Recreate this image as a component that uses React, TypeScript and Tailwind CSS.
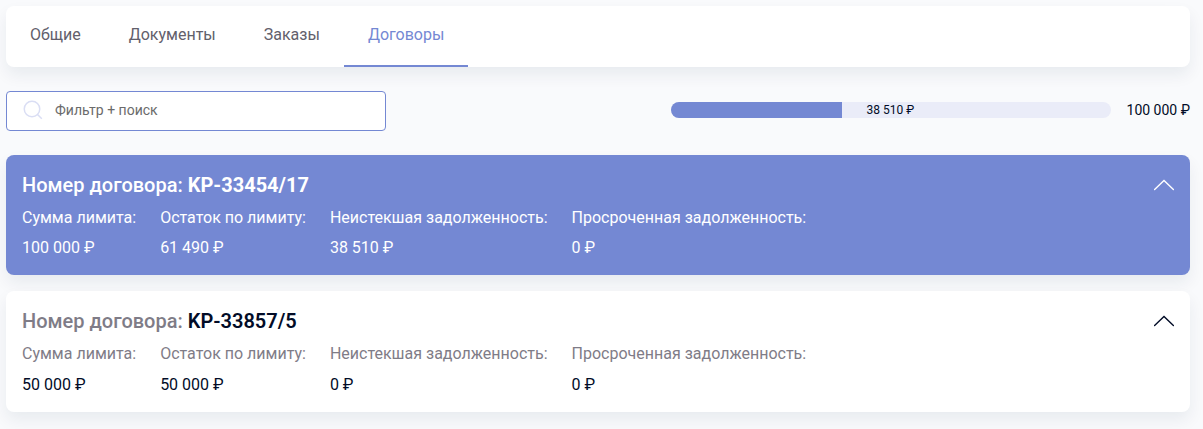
type Contract = {
  id: string;
  active: boolean;
  values: string[];
};

const tabs = ["Общие", "Документы", "Заказы", "Договоры"];

const labels = [
  "Сумма лимита:",
  "Остаток по лимиту:",
  "Неистекшая задолженность:",
  "Просроченная задолженность:",
];

const contracts: Contract[] = [
  { id: "KP-33454/17", active: true, values: ["100 000 ₽", "61 490 ₽", "38 510 ₽", "0 ₽"] },
  { id: "KP-33857/5", active: false, values: ["50 000 ₽", "50 000 ₽", "0 ₽", "0 ₽"] },
];

const shadow = "shadow-[0_8px_16px_rgba(0,46,70,0.07)]";

function SearchIcon() {
  return (
    <svg className="h-5 w-5 shrink-0" viewBox="0 0 20 20" fill="none" stroke="#dadef4" strokeWidth="1.5">
      <circle cx="9" cy="9" r="7.75" />
      <path d="M14.5 14.5L18.8 18.8" />
    </svg>
  );
}

function ChevronUp() {
  return (
    <svg className="h-3 w-5" viewBox="0 0 20 12" fill="none" stroke="currentColor" strokeWidth="1.4" strokeLinecap="round">
      <path d="M0.6 10.6L10 1.4L19.4 10.6" />
    </svg>
  );
}

function ContractCard({ contract }: { contract: Contract }) {
  const { active } = contract;
  return (
    <section
      className={`rounded-lg px-4 ${shadow} ${
        active ? "h-[120px] bg-[#7488d3] text-white" : "h-[121px] bg-white text-[#020c27]"
      }`}
    >
      <div className="flex h-[51px] items-end justify-between">
        <h2 className={`mb-[9px] text-xl leading-6 font-medium ${active ? "" : "text-[#7f7c87]"}`}>
          Номер договора:{" "}
          <span className={active ? "font-bold" : "font-semibold text-[#020c27]"}>{contract.id}</span>
        </h2>
        <button className="mb-[15px]" aria-label="Свернуть">
          <ChevronUp />
        </button>
      </div>
      <dl className="flex gap-6 text-base leading-6">
        {labels.map((label, i) => (
          <div key={label}>
            <dt className={active ? "" : "text-[#7f7c87]"}>{label}</dt>
            <dd className={active ? "mt-1.5" : "mt-[7px]"}>{contract.values[i]}</dd>
          </div>
        ))}
      </dl>
    </section>
  );
}

export default function App() {
  return (
    <main className="h-[429px] overflow-hidden bg-[#f9fafc] pt-1.5 pr-[13px] pl-1.5 font-[Roboto,sans-serif]">
      <nav className={`flex h-[61px] rounded-lg bg-white ${shadow}`}>
        {tabs.map((tab) => (
          <a
            key={tab}
            className={`h-full border-b-2 px-6 pt-[17px] text-base leading-6 ${
              tab === "Договоры" ? "border-[#7488d3] text-[#7488d3]" : "border-transparent text-[#62606b]"
            }`}
          >
            {tab}
          </a>
        ))}
      </nav>

      <div className="mt-6 flex h-10 items-center justify-between">
        <label className="flex h-10 w-[380px] items-center gap-3 rounded border border-[#7488d3] bg-white px-4 pb-0.5">
          <SearchIcon />
          <input
            className="w-full bg-transparent text-sm outline-none placeholder:text-[#6b6b6b]"
            placeholder="Фильтр + поиск"
          />
        </label>
        <div className="flex items-center gap-4 pb-0.5 text-[#020c27]">
          <div className="flex h-4 w-[440px] items-center overflow-hidden rounded-full bg-[#eaecf8]">
            <div className="h-full w-[171px] bg-[#7488d3]" />
            <span className="ml-[25px] text-xs leading-4">38 510 ₽</span>
          </div>
          <span className="text-sm leading-5">100 000 ₽</span>
        </div>
      </div>

      <div className="mt-6 flex flex-col gap-4">
        {contracts.map((contract) => (
          <ContractCard key={contract.id} contract={contract} />
        ))}
      </div>
    </main>
  );
}
